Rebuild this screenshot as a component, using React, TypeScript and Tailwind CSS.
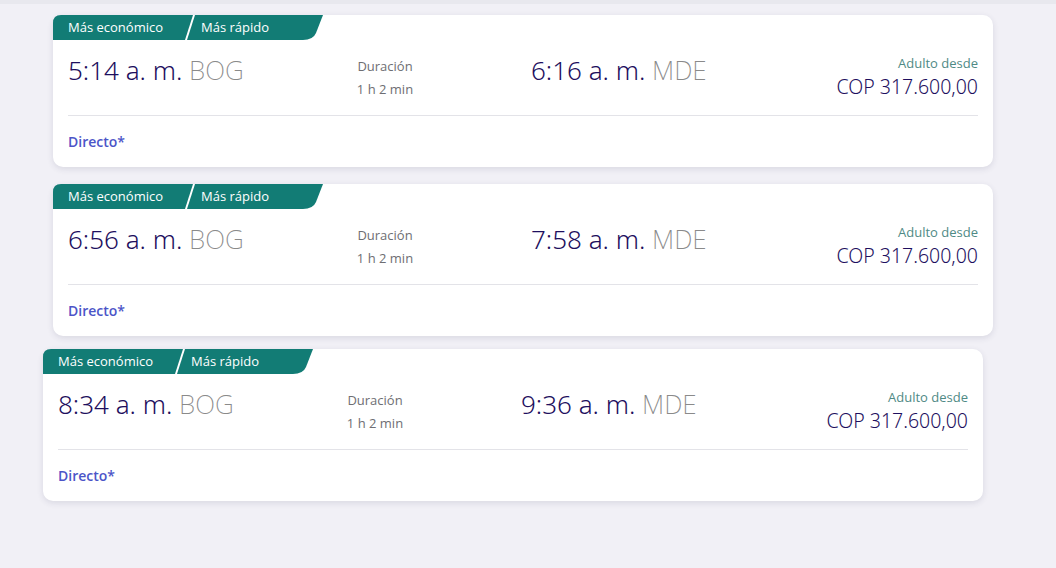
import React from "react";

type Flight = { dep: string; arr: string; shift?: boolean };

const flights: Flight[] = [
  { dep: "5:14 a. m.", arr: "6:16 a. m." },
  { dep: "6:56 a. m.", arr: "7:58 a. m." },
  { dep: "8:34 a. m.", arr: "9:36 a. m.", shift: true },
];

const noto = { fontFamily: '"Noto Sans", sans-serif' };

function Badge() {
  return (
    <div className="relative h-[25px] w-[270px]">
      <svg className="absolute inset-0" width="270" height="25" viewBox="0 0 270 25">
        <path d="M0 8 Q0 0 8 0 L140 0 L132 25 L0 25 Z" fill="#127c75" />
        <path d="M142 0 L270 0 L263 18 Q260 25 250 25 L134 25 Z" fill="#127c75" />
      </svg>
      <div className="relative flex h-full items-center text-[13px] text-white">
        <span className="ml-[15px]">Más económico</span>
        <span className="ml-[38px]">Más rápido</span>
      </div>
    </div>
  );
}

function Card({ f }: { f: Flight }) {
  return (
    <div
      className={
        "w-[940px] h-[152px] rounded-[10px] bg-white shadow-[0_2px_6px_rgba(40,40,80,0.12)] flex flex-col " +
        (f.shift ? "ml-[43px]" : "ml-[53px]")
      }
    >
      <Badge />
      <div className="mx-[15px] flex h-[76px] items-start border-b border-[#e3e3e8]">
        <div className="w-[250px] pt-[15px] text-[26px] font-[350] leading-[30px] text-[#1e0f5e]" style={noto}>
          {f.dep} <span className="font-extralight text-[#8a8a8a]">BOG</span>
        </div>
        <div className="w-[134px] pt-[17px] text-center text-[13px] text-[#6e6e73]">
          <div className="leading-[18px]">Duración</div>
          <div className="mt-[5px] leading-[18px]">1 h 2 min</div>
        </div>
        <div className="ml-[79px] flex-1 pt-[15px] text-[26px] font-[350] leading-[30px] text-[#1e0f5e]" style={noto}>
          {f.arr} <span className="font-extralight text-[#8a8a8a]">MDE</span>
        </div>
        <div className="pt-[14px] text-right">
          <div className="text-[13px] leading-[18px] text-[#4f8a85]">Adulto desde</div>
          <div className="mt-[3px] text-[19.5px] font-[350] leading-[24px] text-[#1e0f5e]" style={noto}>
            COP 317.600,00
          </div>
        </div>
      </div>
      <div className="mx-[15px] pt-[16px] text-[14px] font-semibold leading-[20px] text-[#4c55c8]">
        Directo*
      </div>
    </div>
  );
}

export default function App() {
  return (
    <div
      className="h-[568px] w-[1056px] overflow-hidden bg-[#f1f0f6] border-t-[4px] border-[#e8e8ee]"
      style={{ fontFamily: '"Open Sans", "Noto Sans", sans-serif' }}
    >
      <div className="pt-[11px] flex flex-col">
        <Card f={flights[0]} />
        <div className="h-[17px]" />
        <Card f={flights[1]} />
        <div className="h-[13px]" />
        <Card f={flights[2]} />
      </div>
    </div>
  );
}
